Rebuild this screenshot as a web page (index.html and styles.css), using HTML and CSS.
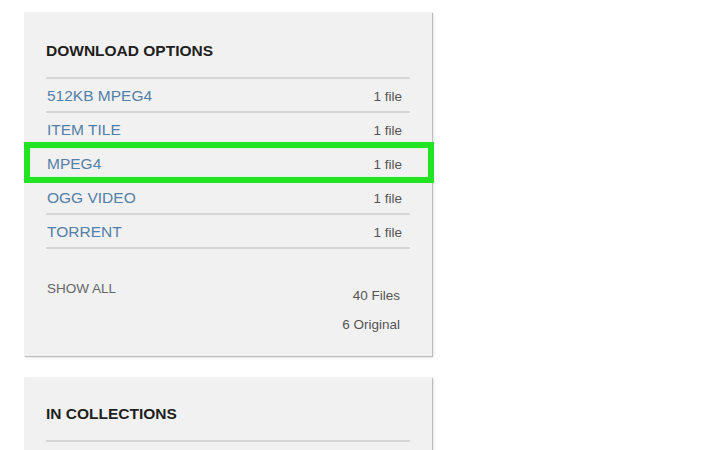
FILE: index.html
```html
<!DOCTYPE html>
<html lang="en">
<head>
<meta charset="utf-8">
<title>Download options</title>
<link rel="stylesheet" href="styles.css">
</head>
<body>
<div class="column">
  <section class="panel">
    <h2 class="panel-title">DOWNLOAD OPTIONS</h2>
    <ul class="options">
      <li class="option"><a class="option-link" href="#">512KB MPEG4</a><span class="option-count">1 file</span></li>
      <li class="option"><a class="option-link" href="#">ITEM TILE</a><span class="option-count">1 file</span></li>
      <li class="option option-highlight"><a class="option-link" href="#">MPEG4</a><span class="option-count">1 file</span></li>
      <li class="option"><a class="option-link" href="#">OGG VIDEO</a><span class="option-count">1 file</span></li>
      <li class="option"><a class="option-link" href="#">TORRENT</a><span class="option-count">1 file</span></li>
    </ul>
    <div class="panel-footer">
      <a class="show-all" href="#">SHOW ALL</a>
      <div class="totals">
        <span>40 Files</span>
        <span>6 Original</span>
      </div>
    </div>
  </section>
  <section class="panel panel-second">
    <h2 class="panel-title">IN COLLECTIONS</h2>
    <ul class="options"></ul>
  </section>
</div>
</body>
</html>
```
FILE: styles.css
```css
html, body {
  margin: 0;
  padding: 0;
  background: #ffffff;
  font-family: "Liberation Sans", Arial, sans-serif;
  overflow: hidden;
}

.column {
  padding: 12px 0 0 24px;
  width: 408px;
  display: flex;
  flex-direction: column;
  gap: 21px;
}

.panel {
  background: #f1f1f1;
  padding: 30px 22px 17px 22px;
  box-shadow: 1px 1px 1px #bdbdbd, 2px 2px 3px rgba(0, 0, 0, 0.08);
}

.panel-second {
  min-height: 120px;
  padding-top: 28px;
}

.panel-title {
  margin: 0 0 17px 0;
  font-size: 15.5px;
  line-height: 18px;
  font-weight: bold;
  color: #1e1e1e;
}

.options {
  list-style: none;
  margin: 0;
  padding: 0;
  border-top: 2px solid #d5d5d5;
}

.option {
  position: relative;
  display: flex;
  justify-content: space-between;
  align-items: baseline;
  padding: 1px 8px 0 1px;
  box-sizing: border-box;
  height: 34px;
  border-bottom: 2px solid #d5d5d5;
}

.option-link {
  font-size: 15.5px;
  line-height: 31px;
  color: #5380a8;
  text-decoration: none;
}

.option-count {
  font-size: 13.5px;
  line-height: 31px;
  color: #555555;
}

.option-highlight::after {
  content: "";
  position: absolute;
  left: -22px;
  right: -24px;
  top: -5px;
  bottom: -4px;
  border: 6px solid #22e422;
  box-shadow: inset 0 0 0 1px #e2f5e2;
  pointer-events: none;
}

.panel-footer {
  display: flex;
  justify-content: space-between;
  padding: 32px 10px 0 1px;
}

.show-all {
  font-size: 13.5px;
  line-height: 16px;
  color: #666666;
  text-decoration: none;
}

.totals {
  display: flex;
  flex-direction: column;
  align-items: flex-end;
  font-size: 13.5px;
  line-height: 29px;
  color: #555555;
}
```
